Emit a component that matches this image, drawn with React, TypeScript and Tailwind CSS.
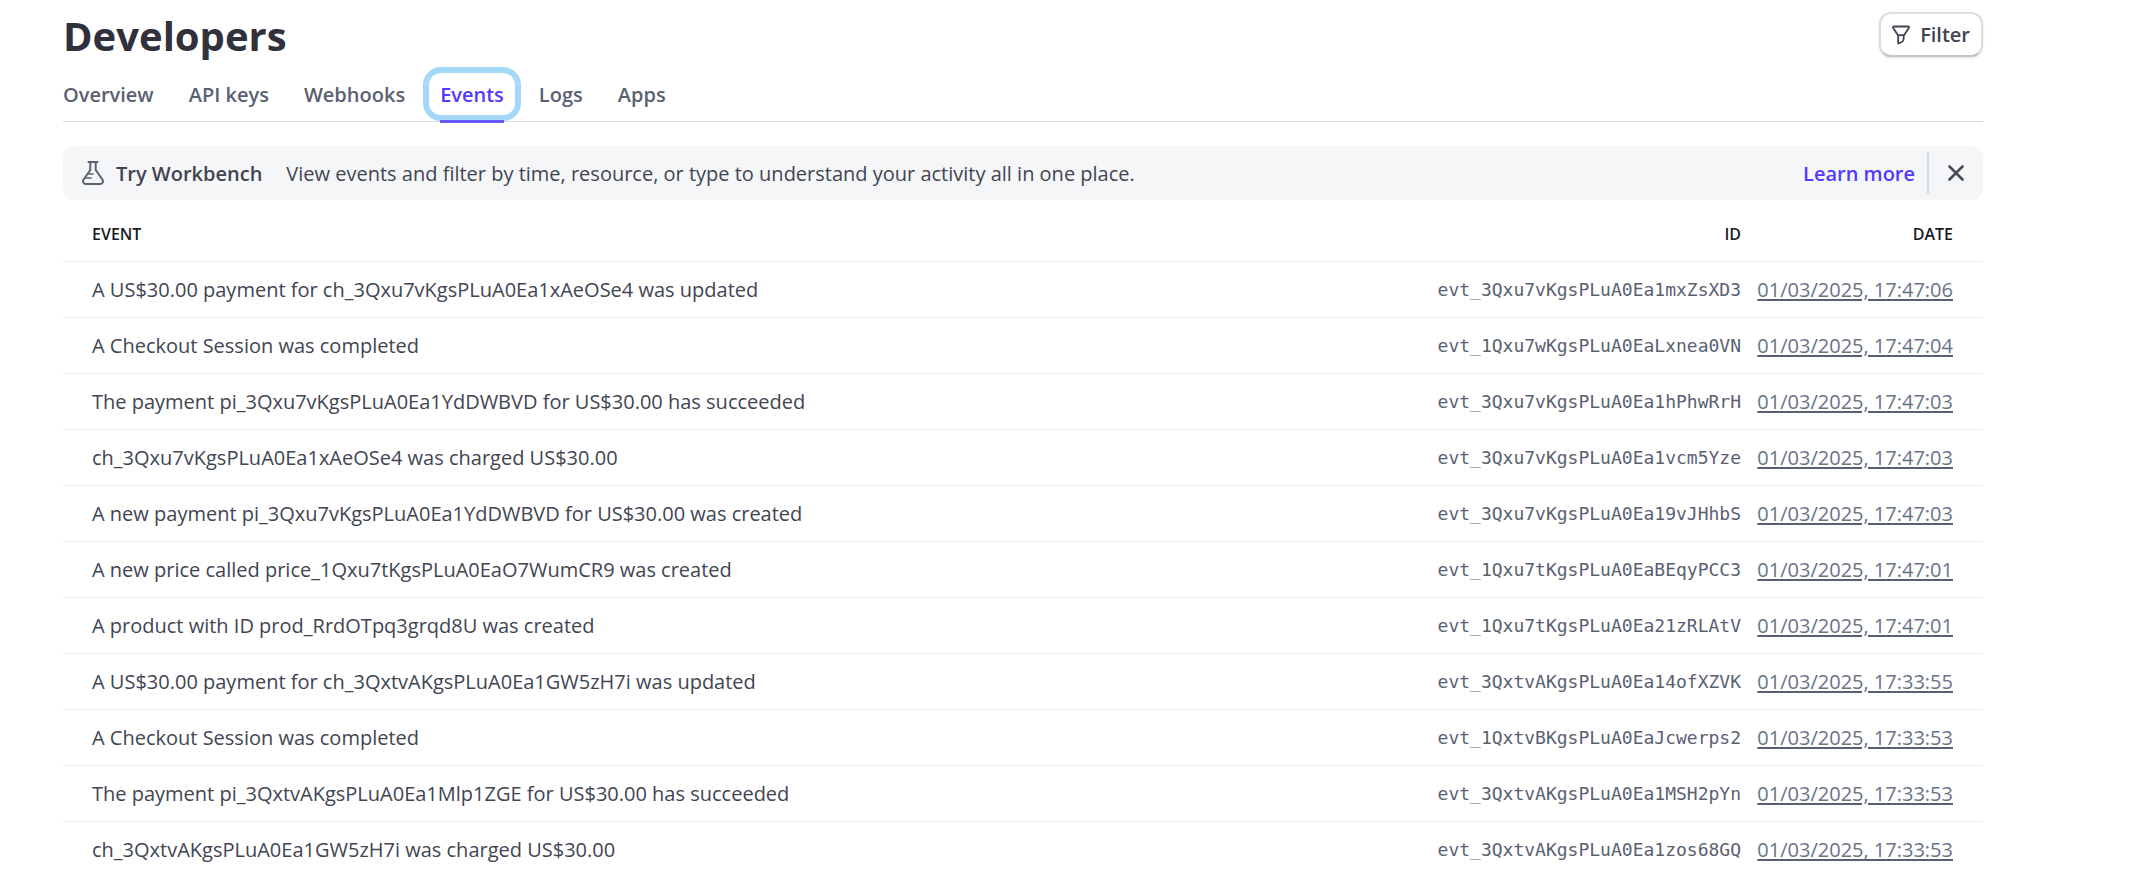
type EventRow = { event: string; id: string; date: string };

const tabs = ["Overview", "API keys", "Webhooks", "Events", "Logs", "Apps"];

const rows: EventRow[] = [
  { event: "A US$30.00 payment for ch_3Qxu7vKgsPLuA0Ea1xAeOSe4 was updated", id: "evt_3Qxu7vKgsPLuA0Ea1mxZsXD3", date: "01/03/2025, 17:47:06" },
  { event: "A Checkout Session was completed", id: "evt_1Qxu7wKgsPLuA0EaLxnea0VN", date: "01/03/2025, 17:47:04" },
  { event: "The payment pi_3Qxu7vKgsPLuA0Ea1YdDWBVD for US$30.00 has succeeded", id: "evt_3Qxu7vKgsPLuA0Ea1hPhwRrH", date: "01/03/2025, 17:47:03" },
  { event: "ch_3Qxu7vKgsPLuA0Ea1xAeOSe4 was charged US$30.00", id: "evt_3Qxu7vKgsPLuA0Ea1vcm5Yze", date: "01/03/2025, 17:47:03" },
  { event: "A new payment pi_3Qxu7vKgsPLuA0Ea1YdDWBVD for US$30.00 was created", id: "evt_3Qxu7vKgsPLuA0Ea19vJHhbS", date: "01/03/2025, 17:47:03" },
  { event: "A new price called price_1Qxu7tKgsPLuA0EaO7WumCR9 was created", id: "evt_1Qxu7tKgsPLuA0EaBEqyPCC3", date: "01/03/2025, 17:47:01" },
  { event: "A product with ID prod_RrdOTpq3grqd8U was created", id: "evt_1Qxu7tKgsPLuA0Ea21zRLAtV", date: "01/03/2025, 17:47:01" },
  { event: "A US$30.00 payment for ch_3QxtvAKgsPLuA0Ea1GW5zH7i was updated", id: "evt_3QxtvAKgsPLuA0Ea14ofXZVK", date: "01/03/2025, 17:33:55" },
  { event: "A Checkout Session was completed", id: "evt_1QxtvBKgsPLuA0EaJcwerps2", date: "01/03/2025, 17:33:53" },
  { event: "The payment pi_3QxtvAKgsPLuA0Ea1Mlp1ZGE for US$30.00 has succeeded", id: "evt_3QxtvAKgsPLuA0Ea1MSH2pYn", date: "01/03/2025, 17:33:53" },
  { event: "ch_3QxtvAKgsPLuA0Ea1GW5zH7i was charged US$30.00", id: "evt_3QxtvAKgsPLuA0Ea1zos68GQ", date: "01/03/2025, 17:33:53" },
];

function FilterIcon() {
  return (
    <svg className="h-5 w-[18px]" viewBox="0 0 18 20" fill="none" stroke="currentColor" strokeWidth="1.8" strokeLinejoin="round" aria-hidden="true">
      <path d="M2 1.5h14c.9 0 1.3.8.8 1.5L12 10.2H6L1.2 3C.7 2.300 1.100 1.500 2 1.500Z" />
      <path d="M6.200 10.200v8.300l3.600-1.500c1.200-.6 1.700-1.500 1.800-2.800l.2-4" />
    </svg>
  );
}

function FlaskIcon() {
  return (
    <svg className="h-6 w-[22px]" viewBox="0 0 22 24" fill="none" stroke="currentColor" strokeWidth="2" strokeLinejoin="round" strokeLinecap="round" aria-hidden="true">
      <path d="M6.500 1h9" />
      <path d="M8.300 1v8L1.600 18.500C.3 20.800 1.500 23 4 23h14c2.500 0 3.700-2.200 2.400-4.500L13.700 9V1" />
      <path d="M6 13h5M4 17h5" strokeWidth="1.700" />
    </svg>
  );
}

function CloseIcon() {
  return (
    <svg className="size-4" viewBox="0 0 16 16" fill="none" stroke="currentColor" strokeWidth="2.600" strokeLinecap="round" aria-hidden="true">
      <path d="m1.500 1.500 13 13M14.500 1.500l-13 13" />
    </svg>
  );
}

export default function App() {
  return (
    <main className="min-h-screen bg-white pr-[172px] pl-[63px] font-['Open_Sans',sans-serif] text-[20px] text-[#414552]">
      <header className="flex items-start justify-between pt-3">
        <h1 className="text-[40px] leading-[48px] font-bold text-[#30313d]">Developers</h1>
        <button
          type="button"
          className="flex h-[45px] items-center gap-[10px] rounded-xl border-2 border-b-[#c4c6cc] border-[#dcdde1] bg-white px-[11px] font-semibold shadow-sm"
        >
          <FilterIcon />
          Filter
        </button>
      </header>

      <nav className="flex h-[62px] items-stretch gap-[35px] border-b border-[#d5dbe1] font-semibold text-[#596171]">
        {tabs.map((tab) =>
          tab === "Events" ? (
            <a key={tab} href="#events" aria-current="page" className="relative flex items-center pt-2 text-[#533afd] outline-none">
              {tab}
              <span className="absolute -inset-x-[17px] top-[7px] bottom-0 rounded-[18px] border-[6px] border-[#a4d8f7]" />
              <span className="absolute inset-x-0 -bottom-0.5 h-[3px] bg-[#675dff]" />
            </a>
          ) : (
            <a key={tab} href="#" className="flex items-center pt-2">
              {tab}
            </a>
          ),
        )}
      </nav>

      <section className="mt-6 flex h-[54px] items-center rounded-xl bg-[#f5f6f8] px-[19px]">
        <span className="text-[#596171]">
          <FlaskIcon />
        </span>
        <strong className="ml-3 pt-0.5 font-semibold">Try Workbench</strong>
        <p className="ml-6 pt-0.5">View events and filter by time, resource, or type to understand your activity all in one place.</p>
        <a href="#workbench" className="ml-auto pt-0.5 font-semibold text-[#533afd]">
          Learn more
        </a>
        <span className="ml-3 h-[42px] w-0.5 bg-[#d5dbe1]" />
        <button type="button" aria-label="Dismiss" className="ml-[19px] text-[#474e5a]">
          <CloseIcon />
        </button>
      </section>

      <table className="w-full border-collapse">
        <thead>
          <tr className="h-[61px] border-b border-[#ebeef1] text-[16px] text-[#1a1b25]">
            <th scope="col" className="pt-2 pl-[29px] text-left font-semibold">EVENT</th>
            <th scope="col" className="pt-2 text-right font-semibold">ID</th>
            <th scope="col" className="w-[242px] pt-2 pr-[30px] text-right font-semibold">DATE</th>
          </tr>
        </thead>
        <tbody>
          {rows.map((row) => (
            <tr key={row.id} className="h-14 border-b border-[#ebeef1] last:border-b-0">
              <td className="pt-0.5 pl-[29px]">{row.event}</td>
              <td className="text-right font-['DejaVu_Sans_Mono',monospace] text-[18px] text-[#596171]">{row.id}</td>
              <td className="pt-0.5 pr-[30px] text-right whitespace-nowrap text-[#687385]">
                <a href="#event" className="underline decoration-[#596171] decoration-2 underline-offset-2">
                  {row.date}
                </a>
              </td>
            </tr>
          ))}
        </tbody>
      </table>
    </main>
  );
}
